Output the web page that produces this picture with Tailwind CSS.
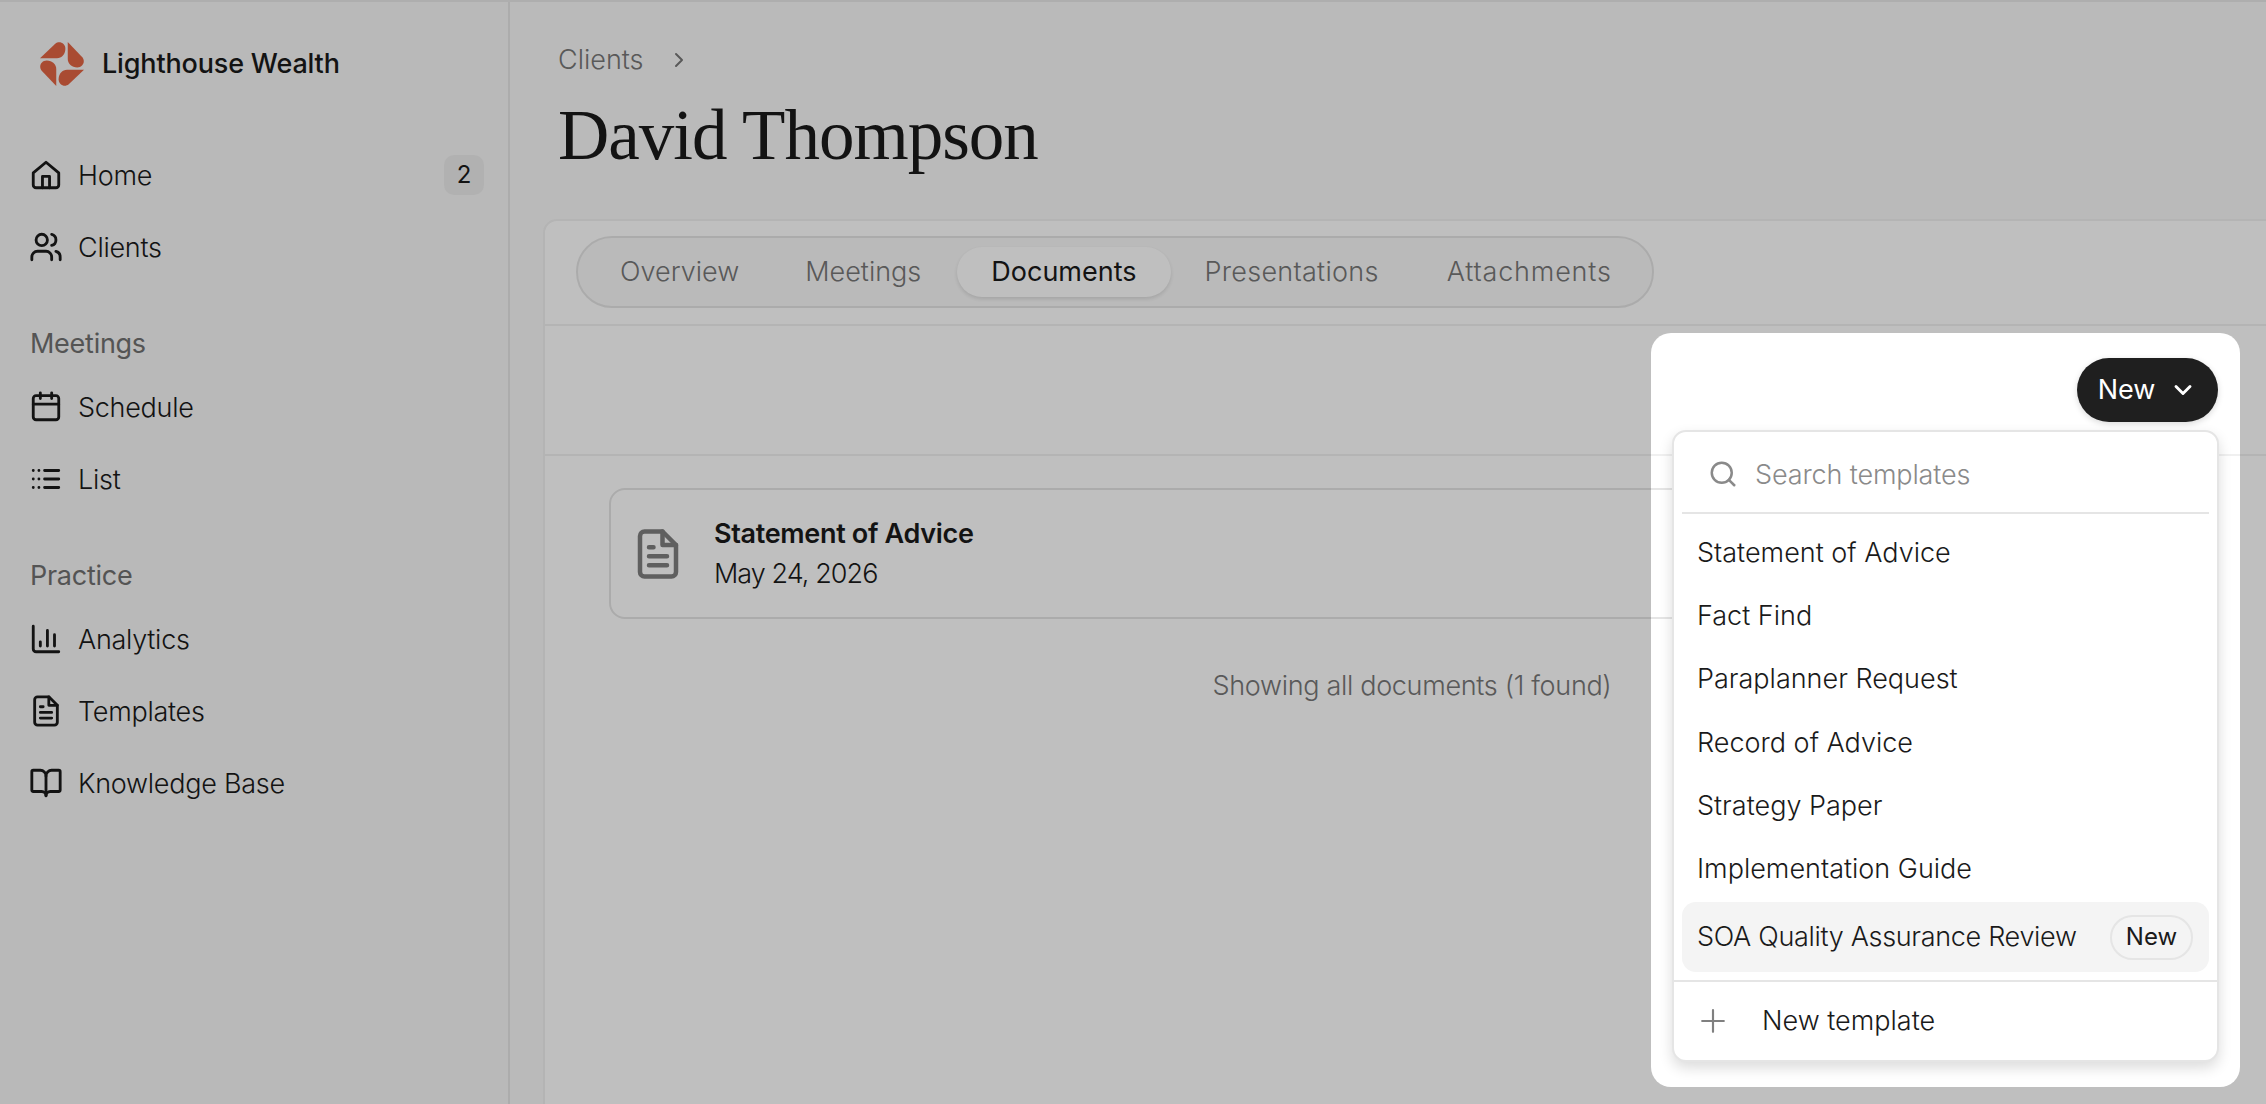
<!DOCTYPE html>
<html lang="en">
<head>
    <meta charset="UTF-8">
    <title>David Thompson - Documents</title>
    <script src="https://cdn.jsdelivr.net/npm/@tailwindcss/browser@4"></script>
</head>
<body class="relative h-[1104px] w-[2266px] overflow-hidden bg-[#f9f9f9] font-['Inter',sans-serif] text-[#1a1a1a]">
    <div class="flex h-full border-t-2 border-[#e9e9e9]">
        <!-- Sidebar -->
        <aside class="w-[510px] shrink-0 border-r-2 border-[#e6e6e6] bg-[#f7f7f7] pt-[39px]">
            <div class="flex h-[46px] items-center gap-[18px] pl-[40px]">
                <svg class="h-[44px] w-[44px]" viewBox="0 0 130 130" fill="#e26443">
                    <path d="M0 48L45 5C57 -5 75 3 75 20C75 36 64 48 50 48Z"/>
                    <path transform="rotate(90 65 65)" d="M0 48L45 5C57 -5 75 3 75 20C75 36 64 48 50 48Z"/>
                    <path transform="rotate(180 65 65)" d="M0 48L45 5C57 -5 75 3 75 20C75 36 64 48 50 48Z"/>
                    <path transform="rotate(270 65 65)" d="M0 48L45 5C57 -5 75 3 75 20C75 36 64 48 50 48Z"/>
                </svg>
                <span class="text-[27px] font-medium tracking-[-0.006em]">Lighthouse Wealth</span>
            </div>

            <nav class="mt-[52px] pl-[29px] pr-[24px] text-[27px] font-light tracking-[-0.01em]">
                <a class="flex h-[72px] items-center gap-[15px]">
                    <svg class="h-[34px] w-[34px]" viewBox="0 0 24 24" fill="none" stroke="currentColor" stroke-width="2" stroke-linecap="round" stroke-linejoin="round"><path d="M3 10.5 12 3l9 7.5V19a2 2 0 0 1-2 2H5a2 2 0 0 1-2-2z"/><path d="M9.5 21v-8h5v8"/></svg>
                    <span class="flex-1 pt-[2px]">Home</span>
                    <span class="flex h-[40px] w-[40px] items-center justify-center rounded-[10px] bg-[#ededed] text-[24px] font-normal">2</span>
                </a>
                <a class="flex h-[72px] items-center gap-[15px]">
                    <svg class="h-[34px] w-[34px]" viewBox="0 0 24 24" fill="none" stroke="currentColor" stroke-width="2" stroke-linecap="round" stroke-linejoin="round"><path d="M16 21v-2a4 4 0 0 0-4-4H6a4 4 0 0 0-4 4v2"/><circle cx="9" cy="7" r="4"/><path d="M22 21v-2a4 4 0 0 0-3-3.87"/><path d="M16 3.13a4 4 0 0 1 0 7.75"/></svg>
                    <span class="pt-[2px]">Clients</span>
                </a>

                <div class="mt-[40px] mb-[8px] flex h-[40px] items-center pl-[1px] pt-[2px] font-normal text-[#717171]">Meetings</div>
                <a class="flex h-[72px] items-center gap-[15px]">
                    <svg class="h-[34px] w-[34px]" viewBox="0 0 24 24" fill="none" stroke="currentColor" stroke-width="2" stroke-linecap="round" stroke-linejoin="round"><rect x="3" y="4" width="18" height="17" rx="2"/><path d="M8 2v4M16 2v4M3 10h18"/></svg>
                    <span class="pt-[2px]">Schedule</span>
                </a>
                <a class="flex h-[72px] items-center gap-[15px]">
                    <svg class="h-[34px] w-[34px]" viewBox="0 0 24 24" fill="none" stroke="currentColor" stroke-width="2" stroke-linecap="round" stroke-linejoin="round"><path d="M11 6h10M11 12h10M11 18h10M3 6h.01M7 6h.01M3 12h.01M7 12h.01M3 18h.01M7 18h.01"/></svg>
                    <span class="pt-[2px]">List</span>
                </a>

                <div class="mt-[40px] mb-[8px] flex h-[40px] items-center pl-[1px] pt-[2px] font-normal text-[#717171]">Practice</div>
                <a class="flex h-[72px] items-center gap-[15px]">
                    <svg class="h-[34px] w-[34px]" viewBox="0 0 24 24" fill="none" stroke="currentColor" stroke-width="2" stroke-linecap="round" stroke-linejoin="round"><path d="M3 3v16a2 2 0 0 0 2 2h16"/><path d="M8 17v-3M13 17V6M18 17V9"/></svg>
                    <span class="pt-[2px]">Analytics</span>
                </a>
                <a class="flex h-[72px] items-center gap-[15px]">
                    <svg class="h-[34px] w-[34px]" viewBox="0 0 24 24" fill="none" stroke="currentColor" stroke-width="2" stroke-linecap="round" stroke-linejoin="round"><path d="M14 2H6a2 2 0 0 0-2 2v16a2 2 0 0 0 2 2h12a2 2 0 0 0 2-2V8z"/><path d="M14 2v6h6M8 9h2M8 13h8M8 17h8"/></svg>
                    <span class="pt-[2px]">Templates</span>
                </a>
                <a class="flex h-[72px] items-center gap-[15px]">
                    <svg class="h-[34px] w-[34px]" viewBox="0 0 24 24" fill="none" stroke="currentColor" stroke-width="2" stroke-linecap="round" stroke-linejoin="round"><path d="M12 7v14"/><path d="M3 18a1 1 0 0 1-1-1V4a1 1 0 0 1 1-1h5a4 4 0 0 1 4 4 4 4 0 0 1 4-4h5a1 1 0 0 1 1 1v13a1 1 0 0 1-1 1h-6a3 3 0 0 0-3 3 3 3 0 0 0-3-3z"/></svg>
                    <span class="pt-[2px]">Knowledge Base</span>
                </a>
            </nav>
        </aside>

        <!-- Main -->
        <main class="min-w-0 flex-1 pl-[33px] pt-[40px]">
            <div class="flex h-[36px] items-center gap-[29px] pl-[15px] text-[27px] font-light text-[#777777]">
                <span>Clients</span>
                <svg class="-ml-[6px] h-[24px] w-[24px]" viewBox="0 0 24 24" fill="none" stroke="currentColor" stroke-width="2" stroke-linecap="round" stroke-linejoin="round"><path d="m9 6 6 6-6 6"/></svg>
            </div>
            <h1 class="mt-[17px] pl-[15px] font-['Liberation_Serif',serif] text-[71px] leading-[80px] tracking-[-0.014em]">David Thompson</h1>

            <div class="mt-[44px] h-[900px] w-[1737px] rounded-tl-[14px] border-2 border-[#f0f0f0] bg-white">
                <div class="h-[105px] border-b-2 border-[#f0f0f0] pl-[31px] pt-[15px]">
                    <div class="inline-flex h-[72px] w-[1078px] items-center rounded-full border-2 border-[#e5e5e5] bg-[#f9f9f9] px-[7px] text-[27px] font-light text-[#777777]">
                        <span class="pl-[35px] pr-[33px]">Overview</span>
                        <span class="pl-[33px] pr-[36px]">Meetings</span>
                        <span class="flex h-[50px] items-center rounded-full bg-white px-[34px] font-normal text-[#1a1a1a] shadow-[0_2px_4px_rgba(0,0,0,0.12)]">Documents</span>
                        <span class="px-[34px] tracking-[0.01em]">Presentations</span>
                        <span class="px-[34px] tracking-[0.03em]">Attachments</span>
                    </div>
                </div>

                <div class="flex h-[130px] items-start justify-end border-b-2 border-[#f0f0f0] pr-[60px] pt-[32px]">
                    <button class="flex h-[64px] w-[141px] items-center justify-center gap-[14px] rounded-full bg-[#1f1f1f] text-[27px] font-normal text-white shadow-[0_2px_6px_rgba(0,0,0,0.15)]">
                        New
                        <svg class="h-[28px] w-[28px]" viewBox="0 0 24 24" fill="none" stroke="currentColor" stroke-width="2.5" stroke-linecap="round" stroke-linejoin="round"><path d="m6 9 6 6 6-6"/></svg>
                    </button>
                </div>

                <div class="px-[64px] pt-[32px]">
                    <div class="flex h-[131px] w-[1606px] items-center gap-[29px] rounded-[16px] border-2 border-[#e5e5e5] pl-[20px]">
                        <svg class="h-[54px] w-[54px] text-[#7f7f7f]" viewBox="0 0 24 24" fill="none" stroke="currentColor" stroke-width="2" stroke-linecap="round" stroke-linejoin="round"><path d="M14 2H6a2 2 0 0 0-2 2v16a2 2 0 0 0 2 2h12a2 2 0 0 0 2-2V8z"/><path d="M14 2v6h6M8 9h2M8 13h8M8 17h8"/></svg>
                        <div class="text-[27px] leading-[40px]">
                            <div class="font-semibold tracking-[-0.012em]">Statement of Advice</div>
                            <div class="font-light tracking-[-0.035em]">May 24, 2026</div>
                        </div>
                    </div>
                    <p class="mt-[47px] w-[1606px] text-center text-[27px] font-light tracking-[-0.012em] text-[#777777]">Showing all documents (1 found)</p>
                </div>
            </div>
        </main>
    </div>

    <!-- Spotlight hole in the dimmed page -->
    <div class="absolute left-[1651px] top-[333px] h-[754px] w-[589px] rounded-[20px] shadow-[0_0_0_3000px_rgba(0,0,0,0.25)]"></div>

    <!-- Template menu -->
    <div class="absolute left-[1672px] top-[430px] w-[547px] rounded-[14px] border-2 border-[#e5e5e5] bg-white text-[27px] font-light shadow-[0_6px_14px_rgba(0,0,0,0.14)]">
        <div class="mx-[8px] flex h-[82px] items-center gap-[17px] border-b-2 border-[#e5e5e5] pl-[26px] pt-[4px] text-[#8a8a8a]">
            <svg class="h-[30px] w-[30px]" viewBox="0 0 24 24" fill="none" stroke="currentColor" stroke-width="2" stroke-linecap="round" stroke-linejoin="round"><circle cx="11" cy="11" r="8"/><path d="m21 21-4.3-4.3"/></svg>
            <span class="pt-[3px] tracking-[-0.005em]">Search templates</span>
        </div>
        <ul class="mx-[8px] pt-[8px]">
            <li class="flex h-[63px] items-center px-[15px]">Statement of Advice</li>
            <li class="flex h-[63px] items-center px-[15px]">Fact Find</li>
            <li class="flex h-[63px] items-center px-[15px]">Paraplanner Request</li>
            <li class="flex h-[64px] items-center px-[15px]">Record of Advice</li>
            <li class="flex h-[63px] items-center px-[15px]">Strategy Paper</li>
            <li class="flex h-[63px] items-center px-[15px]">Implementation Guide</li>
            <li class="mt-[1px] flex h-[70px] items-center justify-between rounded-[14px] bg-[#f4f4f4] pl-[15px] pr-[16px]">
                <span class="tracking-[-0.012em]">SOA Quality Assurance Review</span>
                <span class="flex h-[45px] w-[83px] items-center justify-center rounded-full border-2 border-[#e5e5e5] text-[24px] font-normal">New</span>
            </li>
        </ul>
        <div class="mt-[8px] flex h-[80px] items-center gap-[36px] border-t-2 border-[#e5e5e5] pl-[26px]">
            <svg class="h-[26px] w-[26px] text-[#808080]" viewBox="0 0 24 24" fill="none" stroke="currentColor" stroke-width="2" stroke-linecap="round"><path d="M12 2v20M2 12h20"/></svg>
            <span>New template</span>
        </div>
    </div>
</body>
</html>
